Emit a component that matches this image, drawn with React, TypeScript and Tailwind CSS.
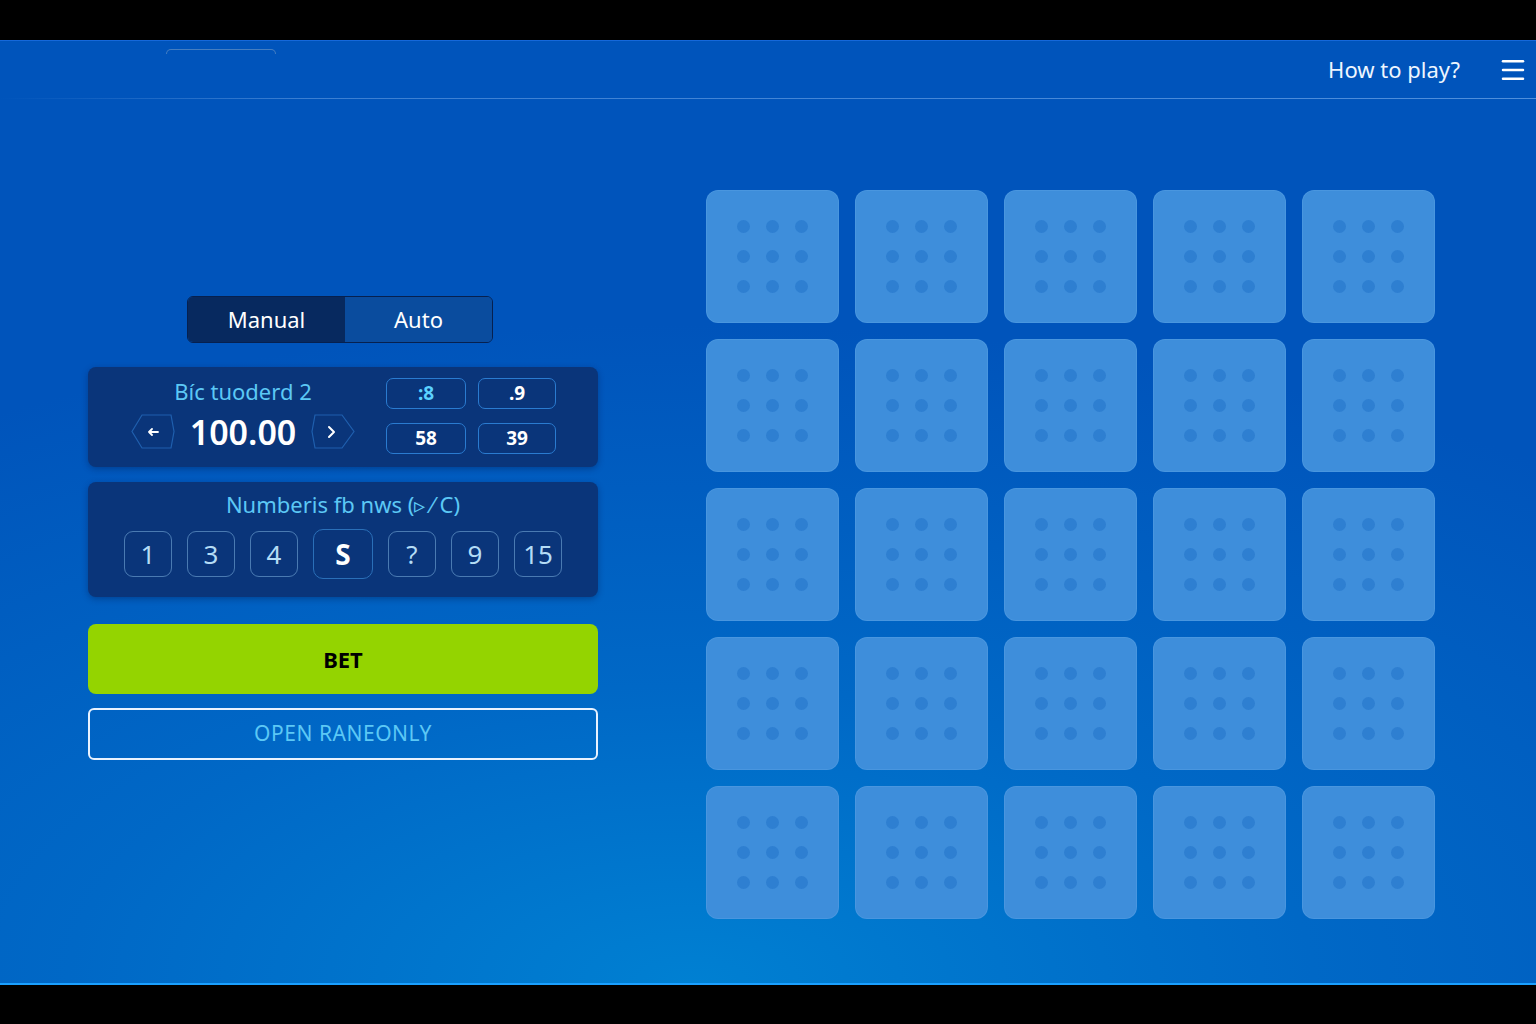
import { Menu } from 'lucide-react';

const chips = [
    { label: ':8', className: 'text-[#5cd2ff]' },
    { label: '.9', className: 'text-white' },
    { label: '58', className: 'text-white' },
    { label: '39', className: 'text-white' },
];

const numbers = ['1', '3', '4', 'S', '?', '9', '15'];

function Tile() {
    return (
        <div className="flex h-[133px] w-[133px] items-center justify-center rounded-[12px] border border-[#5aa2e6]/40 bg-[#3e8edb]">
            <div className="grid grid-cols-3 gap-x-[16px] gap-y-[17px]">
                {Array.from({ length: 9 }).map((_, i) => (
                    <span key={i} className="h-[13px] w-[13px] rounded-full bg-[#2e7fd1]" />
                ))}
            </div>
        </div>
    );
}

function StepButton({ dir }: { dir: 'left' | 'right' }) {
    return (
        <button className="relative flex h-[35px] w-[44px] items-center justify-center">
            <svg className="absolute inset-0" width="44" height="35" viewBox="0 0 44 35" fill="none">
                {dir === 'left' ? (
                    <polygon points="11,1 40,1 43,17.5 40,34 11,34 1,17.5" stroke="#1f5fae" strokeWidth="1.2" />
                ) : (
                    <polygon points="4,1 31,1 43,17.5 31,34 4,34 1,17.5" stroke="#1f5fae" strokeWidth="1.2" />
                )}
            </svg>
            {dir === 'left' ? (
                <svg className="relative" width="12" height="8" viewBox="0 0 12 8" fill="none">
                    <path d="M11 4H2M5 1L2 4l3 3" stroke="white" strokeWidth="1.8" strokeLinecap="round" strokeLinejoin="round" />
                </svg>
            ) : (
                <svg className="relative -ml-[4px]" width="9" height="14" viewBox="0 0 9 14" fill="none">
                    <path d="M2 2l5 5-5 5" stroke="white" strokeWidth="2" strokeLinecap="round" strokeLinejoin="round" />
                </svg>
            )}
        </button>
    );
}

export default function App() {
    return (
        <div className="flex h-[1024px] w-[1536px] flex-col bg-black font-['Noto_Sans',sans-serif]">
            <div className="h-[40px] shrink-0" />

            <main className="flex h-[945px] shrink-0 flex-col border-t border-b-2 border-t-[#1568da] border-b-[#1aa0ff] bg-[radial-gradient(ellipse_90%_70%_at_45%_100%,#0080d2_0%,#0068c6_45%,#0054bb_100%)]">
                {/* top bar */}
                <header className="flex h-[57px] shrink-0 items-start">
                    <div className="ml-[166px] mt-[8px] h-[5px] w-[110px] rounded-t-[6px] border-t border-x border-[#8aa7c8]/50" />
                    <div className="ml-auto flex h-full items-center">
                        <span className="text-[22px] text-[#eef6ff]">How to play?</span>
                        <Menu className="ml-[38px] mr-[8px] h-[30px] w-[30px] text-white" strokeWidth={2} />
                    </div>
                </header>
                <div className="h-[1px] shrink-0 bg-gradient-to-r from-transparent via-[#3b7fd2] via-20% to-[#4f8fdc]" />

                <div className="flex flex-1 pl-[88px]">
                    {/* controls column */}
                    <div className="flex w-[510px] flex-col pt-[197px]">
                        <div className="ml-[99px] flex h-[47px] w-[306px] overflow-hidden rounded-[6px] border border-[#06204f] text-[22px] text-white">
                            <div className="flex w-[157px] items-center justify-center bg-[#07295f]">Manual</div>
                            <div className="flex flex-1 items-center justify-center bg-[#0a4c9e]">Auto</div>
                        </div>

                        <div className="mt-[24px] flex h-[100px] items-start rounded-[8px] bg-[#0a357a] pl-[43px] shadow-[0_2px_6px_rgba(0,20,70,0.35)]">
                            <div className="mt-[13px] flex w-[224px] flex-col items-center">
                                <span className="text-[22px] leading-none text-[#5cc8f5]">Bíc tuoderd 2</span>
                                <div className="mt-[12px] flex w-full items-center justify-between">
                                    <StepButton dir="left" />
                                    <span className="text-[34px] font-semibold leading-none text-white">100.00</span>
                                    <StepButton dir="right" />
                                </div>
                            </div>
                            <div className="ml-[31px] mt-[11px] grid grid-cols-[80px_78px] gap-x-[12px] gap-y-[14px]">
                                {chips.map((c) => (
                                    <div
                                        key={c.label}
                                        className={`flex h-[31px] items-center justify-center rounded-[7px] border border-[#2a7bd0] text-[19px] font-bold ${c.className}`}
                                    >
                                        {c.label}
                                    </div>
                                ))}
                            </div>
                        </div>

                        <div className="mt-[15px] flex h-[115px] flex-col items-center rounded-[8px] bg-[#0a357a] pt-[6px] shadow-[0_2px_6px_rgba(0,20,70,0.35)]">
                            <span className="text-[22px] text-[#5cc8f5]">Numberis fb nws (▹ ⁄ C)</span>
                            <div className="mt-[8px] flex items-center gap-[15px]">
                                {numbers.map((n) =>
                                    n === 'S' ? (
                                        <div
                                            key={n}
                                            className="flex h-[50px] w-[60px] items-center justify-center rounded-[10px] border border-[#2a6fb8] text-[28px] font-bold text-white"
                                        >
                                            {n}
                                        </div>
                                    ) : (
                                        <div
                                            key={n}
                                            className="flex h-[46px] w-[48px] items-center justify-center rounded-[9px] border border-[#5a8cc0]/80 text-[26px] text-[#b4dcf6]"
                                        >
                                            {n}
                                        </div>
                                    )
                                )}
                            </div>
                        </div>

                        <button className="mt-[27px] flex h-[70px] items-center justify-center rounded-[8px] bg-[#94d400] text-[22px] font-bold text-black">
                            BET
                        </button>
                        <button className="mt-[14px] flex h-[52px] items-center justify-center rounded-[6px] border-2 border-[#e8f2ff] text-[21px] tracking-wide text-[#5cc8f5]">
                            OPEN RANEONLY
                        </button>
                    </div>

                    {/* tile board */}
                    <div className="ml-[108px] pt-[91px]">
                        <div className="grid grid-cols-5 gap-x-[16px] gap-y-[16px]">
                            {Array.from({ length: 25 }).map((_, i) => (
                                <Tile key={i} />
                            ))}
                        </div>
                    </div>
                </div>
            </main>
        </div>
    );
}
